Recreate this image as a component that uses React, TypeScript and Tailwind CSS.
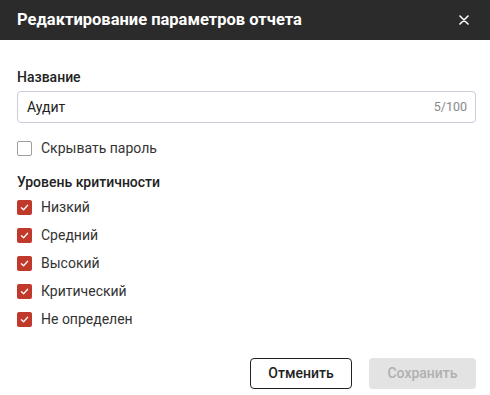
import React from 'react';

const LEVELS = ['Низкий', 'Средний', 'Высокий', 'Критический', 'Не определен'];

const CheckBox = ({ checked }: { checked: boolean }) =>
    checked ? (
        <span className="w-[15px] h-[15px] rounded-[2px] bg-[#c0392b] flex items-center justify-center shrink-0">
            <svg width="9" height="9" viewBox="0 0 10 10" fill="none">
                <path d="M1.5 5.2 L4 7.5 L8.5 2.5" stroke="white" strokeWidth="1.4" strokeLinecap="round" strokeLinejoin="round" />
            </svg>
        </span>
    ) : (
        <span className="w-[15px] h-[15px] rounded-[2px] border border-[#9e9e9e] bg-white shrink-0" />
    );

export default function App() {
    return (
        <div className="w-[490px] h-[395px] bg-white text-[#333] flex flex-col" style={{ fontFamily: 'Roboto, "Noto Sans", sans-serif' }}>
            {/* Header */}
            <div className="h-[40px] bg-[#2b2b2b] flex items-center justify-between pl-[17px] pr-[21px] shrink-0">
                <h2 className="text-white text-[16.5px] font-bold">Редактирование параметров отчета</h2>
                <svg width="10" height="10" viewBox="0 0 10 10" className="text-white">
                    <path d="M1 1 L9 9 M9 1 L1 9" stroke="currentColor" strokeWidth="1.6" strokeLinecap="round" />
                </svg>
            </div>

            <div className="flex-1 pl-[17px] pr-[14px] pt-[27px] flex flex-col">
                <label className="text-[14px] font-medium leading-[20px] text-[#222]">Название</label>
                <div className="mt-[4px] h-[32px] border border-[#c9cedb] rounded-[4px] flex items-center justify-between pl-[9px] pr-[8px]">
                    <span className="text-[14px] text-[#222]">Аудит</span>
                    <span className="text-[12.5px] text-[#888]">5/100</span>
                </div>

                <div className="mt-[17px] flex items-center gap-[9px] h-[16px]">
                    <CheckBox checked={false} />
                    <span className="text-[14px] text-[#333]">Скрывать пароль</span>
                </div>

                <div className="mt-[16px] text-[14px] font-medium leading-[20px] text-[#222]">Уровень критичности</div>
                <div className="mt-[7px] flex flex-col gap-[12px]">
                    {LEVELS.map((l) => (
                        <div key={l} className="flex items-center gap-[9px] h-[16px]">
                            <CheckBox checked />
                            <span className="text-[14px] text-[#333]">{l}</span>
                        </div>
                    ))}
                </div>

                <div className="mt-auto mb-[6px] flex justify-end gap-[17px]">
                    <button className="h-[31px] w-[102px] border border-[#222] rounded-[4px] text-[14px] font-medium text-[#222] bg-white">
                        Отменить
                    </button>
                    <button disabled className="h-[31px] w-[107px] rounded-[4px] text-[14px] font-medium text-[#b0b0b0] bg-[#e3e3e3]">
                        Сохранить
                    </button>
                </div>
            </div>
        </div>
    );
}
